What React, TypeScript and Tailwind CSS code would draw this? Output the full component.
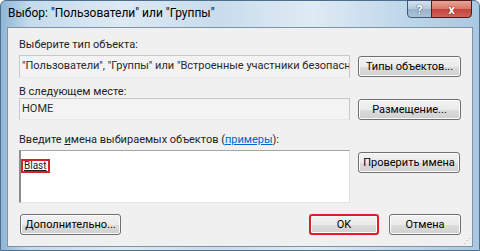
const btn =
  "flex h-[21px] items-center justify-center whitespace-nowrap rounded-[3px] border border-[#707070] bg-[linear-gradient(to_bottom,#f2f2f2_0%,#ebebeb_50%,#dddddd_51%,#cfcfcf_100%)] text-[11px] leading-none text-black shadow-[inset_0_0_0_1px_#fcfcfc]";

const App = () => {
  return (
    <div className="h-[251px] w-[480px] overflow-hidden bg-white font-['Roboto',sans-serif]">
      <div className="relative flex h-[251px] w-[480px] flex-col rounded-t-[6px] border border-[#4f6f8f] bg-[linear-gradient(to_right,#8fb6d6_0%,#c4dbed_6%,#dde9f3_25%,#c8dcec_45%,#dfebf4_65%,#bed6ea_85%,#a9c8e1_100%)] px-[6px] pb-[3px] pt-[26px]">
        {/* title */}
        <div className="absolute left-[7px] top-[5px] text-[12px] leading-[15px] text-black">
          Выбор: "Пользователи" или "Группы"
        </div>
        <div className="absolute right-[7px] top-[-1px] flex h-[18px]">
          <div className="flex w-[25px] items-center justify-center rounded-bl-[4px] border border-[#3b5878] bg-[linear-gradient(to_bottom,#d3e2ee_0%,#b4cadd_50%,#98b2ca_51%,#a9c3d8_100%)] text-[13px] font-bold leading-none text-white [text-shadow:0_0_1px_#2a4460,0_0_1px_#2a4460]">
            ?
          </div>
          <div className="ml-[-1px] flex w-[41px] items-center justify-center rounded-br-[4px] border border-[#4e1a1a] bg-[linear-gradient(to_bottom,#e8a593_0%,#d9776a_50%,#c4443a_51%,#d0625a_100%)] text-[13px] font-bold leading-none text-white [text-shadow:0_0_1px_#5a1010,0_0_1px_#5a1010]">
            x
          </div>
        </div>

        {/* client area */}
        <div className="relative flex flex-1 flex-col border border-[#7e93a9] bg-[#f0f0f0] pl-[11px] pr-[10px] pt-[10px]">
          <div className="h-[14px] text-[11px] leading-[14px] text-[#1e1e1e]">
            Выберите тип объекта:
          </div>
          <div className="mt-[3px] flex items-center gap-[8px]">
            <div className="flex h-[23px] w-[331px] items-center overflow-hidden whitespace-nowrap border border-[#c8c8c8] border-b-[#e8e8e8] bg-[#f3f3f3] px-[2px] text-[11px] text-[#2a2a2a]">
              "Пользователи", "Группы" или "Встроенные участники безопасн
            </div>
            <div className={`${btn} w-[103px]`}>Типы объектов...</div>
          </div>

          <div className="mt-[7px] h-[13px] text-[11px] leading-[13px] text-[#1e1e1e]">
            В следующем месте:
          </div>
          <div className="flex items-center gap-[8px]">
            <div className="flex h-[22px] w-[331px] items-center border border-[#c8c8c8] border-b-[#e8e8e8] bg-[#f3f3f3] px-[2px] text-[11px] text-[#2a2a2a]">
              HOME
            </div>
            <div className={`${btn} w-[103px]`}>Размещение...</div>
          </div>

          <div className="mt-[13px] h-[14px] text-[11px] leading-[14px] text-[#1e1e1e]">
            Введите <span className="underline">и</span>мена выбираемых объектов (
            <span className="text-[#0066cc] underline">примеры</span>):
          </div>
          <div className="mt-[3px] flex items-start gap-[8px]">
            <div className="h-[53px] w-[331px] border border-l-2 border-[#e2e3ea] border-l-[#8c8c8c] border-t-[#a5a5a5] bg-white pt-[1px]">
              <span className="inline-block h-[14px] border-2 border-[#d8202c] px-[1px] text-[10px] leading-[10px] text-[#1a1a1a] underline">
                Blast
              </span>
            </div>
            <div className={`${btn} mt-[2px] w-[102px]`}>Проверить имена</div>
          </div>

          <div className="mt-[11px] flex items-center">
            <div className={`${btn} ml-[1px] w-[101px]`}>Дополнительно...</div>
            <div className={`${btn} ml-auto w-[70px] border-2 border-[#d8202c]`}>OK</div>
            <div className={`${btn} ml-[10px] mr-[1px] w-[72px]`}>Отмена</div>
          </div>

          {/* size grip */}
          <div className="absolute bottom-[1px] right-[1px] text-[8px] leading-none text-[#b5b5b5]">
            ⋰
          </div>
        </div>
      </div>
    </div>
  );
};

export default App;
